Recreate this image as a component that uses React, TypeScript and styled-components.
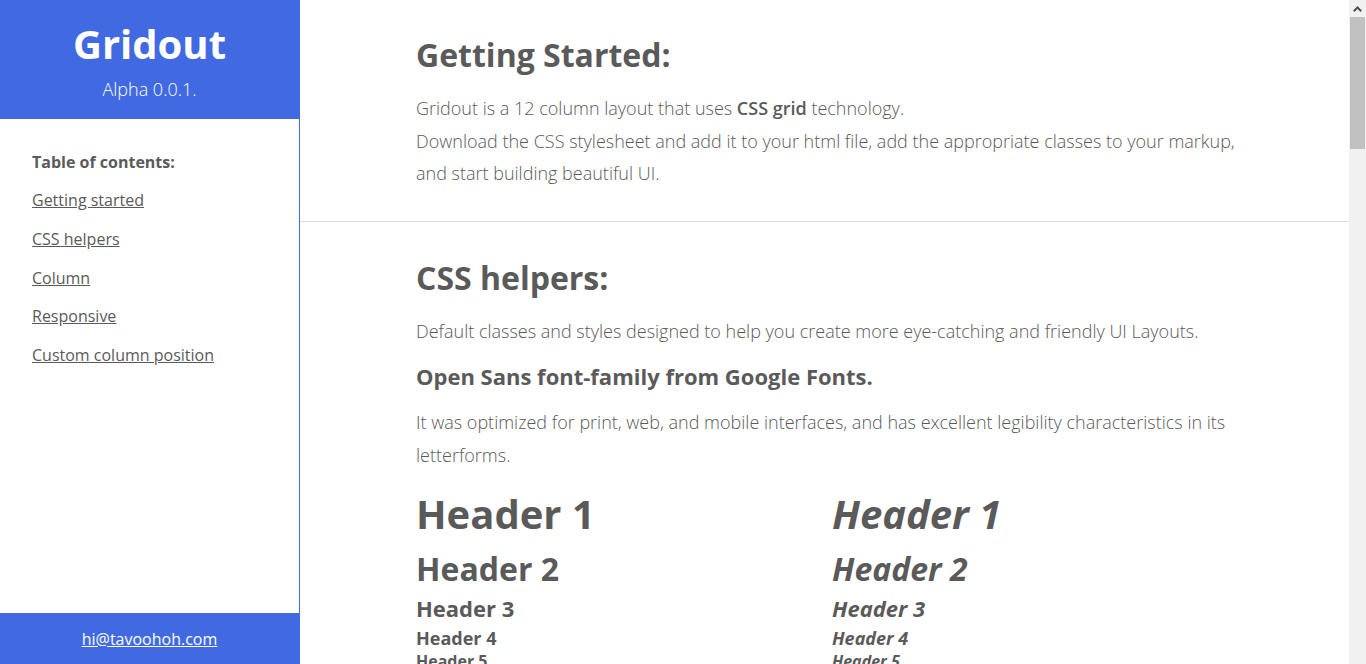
import React from "react";
import styled, { createGlobalStyle } from "styled-components";

const Global = createGlobalStyle`
  html, body { margin: 0; padding: 0; height: 100%; overflow: hidden; }
  body { font-family: "Open Sans", "Liberation Sans", sans-serif; color: #5a5a5a; background: #fff; }
  #root { height: 100%; }
`;

const Layout = styled.div`
  display: flex;
  height: 100vh;
`;

const Sidebar = styled.aside`
  width: 300px;
  flex: 0 0 300px;
  box-sizing: border-box;
  border-right: 1px solid #4169e1;
  display: flex;
  flex-direction: column;
`;

const Brand = styled.header`
  background: #4169e1;
  height: 119px;
  box-sizing: border-box;
  padding-top: 19px;
  text-align: center;
  color: #fff;
`;

const BrandTitle = styled.h1`
  margin: 0;
  font-size: 40px;
  line-height: 50px;
  font-weight: 700;
`;

const BrandVersion = styled.p`
  margin: 9px 0 0;
  font-size: 18px;
  line-height: 22px;
  font-weight: 300;
`;

const Toc = styled.nav`
  flex: 1;
  padding: 32px 32px 0;
`;

const TocTitle = styled.h4`
  margin: 0 0 16px;
  font-size: 16px;
  line-height: 22px;
  font-weight: 700;
`;

const TocList = styled.ul`
  list-style: none;
  margin: 0;
  padding: 0;
  display: flex;
  flex-direction: column;
  gap: 16.75px;
`;

const TocLink = styled.a`
  color: #5a5a5a;
  font-size: 16px;
  line-height: 22px;
  text-decoration: underline;
`;

const Footer = styled.footer`
  background: #4169e1;
  height: 51px;
  display: flex;
  align-items: center;
  justify-content: center;
`;

const Mail = styled.a`
  color: #fff;
  font-size: 16px;
  line-height: 22px;
  text-decoration: underline;
`;

const Main = styled.main`
  flex: 1;
  overflow-y: auto;
  scrollbar-width: none;
  &::-webkit-scrollbar { display: none; }
`;

const ScrollRail = styled.div`
  flex: 0 0 17px;
  background: #f1f1f1;
  display: flex;
  flex-direction: column;
`;

const ScrollButton = styled.div`
  height: 17px;
  display: flex;
  align-items: center;
  justify-content: center;
`;

const ScrollThumb = styled.div`
  height: 132px;
  margin: 0 1px;
  background: #c1c1c1;
`;

const Section = styled.section<{ $first?: boolean; $last?: boolean }>`
  padding: ${(p) => (p.$first ? "35px" : "36px")} 0 31px 116px;
  border-bottom: ${(p) => (p.$last ? "none" : "1px solid #dcdcdc")};
`;

const Content = styled.div`
  width: 832px;
`;

const SectionTitle = styled.h2`
  margin: 0 0 17px;
  font-size: 32px;
  line-height: 40px;
  font-weight: 700;
`;

const Text = styled.p<{ $mb?: number }>`
  margin: 0 0 ${(p) => (p.$mb ?? 14)}px;
  font-size: 18px;
  line-height: 32.5px;
  font-weight: 300;
  & strong { font-weight: 600; }
`;

const SubTitle = styled.h3`
  margin: 0 0 15px;
  font-size: 22px;
  line-height: 30px;
  font-weight: 700;
`;

const HeaderGrid = styled.div`
  display: grid;
  grid-template-columns: 1fr 1fr;
  margin-top: 19px;
`;

const HeaderCol = styled.div<{ $italic?: boolean }>`
  font-style: ${(p) => (p.$italic ? "italic" : "normal")};
`;

const Sample = styled.div<{ $size: number; $lh: number; $mb: number }>`
  font-weight: 700;
  font-size: ${(p) => p.$size}px;
  line-height: ${(p) => p.$lh}px;
  margin-bottom: ${(p) => p.$mb}px;
`;

const samples = [
  { label: "Header 1", size: 40, lh: 48, mb: 11 },
  { label: "Header 2", size: 32, lh: 40, mb: 5 },
  { label: "Header 3", size: 22, lh: 28, mb: 4 },
  { label: "Header 4", size: 18, lh: 24, mb: 1 },
  { label: "Header 5", size: 16, lh: 20, mb: 2 },
  { label: "Header 6", size: 14, lh: 20, mb: 0 },
];

const tocItems = ["Getting started", "CSS helpers", "Column", "Responsive", "Custom column position"];

export default function App() {
  return (
    <>
      <Global />
      <Layout>
        <Sidebar>
          <Brand>
            <BrandTitle>Gridout</BrandTitle>
            <BrandVersion>Alpha 0.0.1.</BrandVersion>
          </Brand>
          <Toc>
            <TocTitle>Table of contents:</TocTitle>
            <TocList>
              {tocItems.map((t) => (
                <li key={t}>
                  <TocLink href="#">{t}</TocLink>
                </li>
              ))}
            </TocList>
          </Toc>
          <Footer>
            <Mail href="#">hi@tavoohoh.com</Mail>
          </Footer>
        </Sidebar>
        <Main>
          <Section $first>
            <Content>
              <SectionTitle>Getting Started:</SectionTitle>
              <Text $mb={0}>
                Gridout is a 12 column layout that uses <strong>CSS grid</strong> technology.
                <br />
                Download the CSS stylesheet and add it to your html file, add the appropriate classes to your markup, and start building beautiful UI.
              </Text>
            </Content>
          </Section>
          <Section $last>
            <Content>
              <SectionTitle>CSS helpers:</SectionTitle>
              <Text>Default classes and styles designed to help you create more eye-catching and friendly UI Layouts.</Text>
              <SubTitle>Open Sans font-family from Google Fonts.</SubTitle>
              <Text>
                It was optimized for print, web, and mobile interfaces, and has excellent legibility characteristics in its letterforms.
              </Text>
              <HeaderGrid>
                <HeaderCol>
                  {samples.map((s) => (
                    <Sample key={s.label} $size={s.size} $lh={s.lh} $mb={s.mb}>{s.label}</Sample>
                  ))}
                </HeaderCol>
                <HeaderCol $italic>
                  {samples.map((s) => (
                    <Sample key={s.label} $size={s.size} $lh={s.lh} $mb={s.mb}>{s.label}</Sample>
                  ))}
                </HeaderCol>
              </HeaderGrid>
            </Content>
          </Section>
        </Main>
        <ScrollRail aria-hidden="true">
          <ScrollButton>
            <svg width="9" height="6" viewBox="0 0 9 6">
              <path d="M0.8 5.2 L4.5 1.5 L8.2 5.2" fill="none" stroke="#505050" strokeWidth="2" />
            </svg>
          </ScrollButton>
          <ScrollThumb />
        </ScrollRail>
      </Layout>
    </>
  );
}
